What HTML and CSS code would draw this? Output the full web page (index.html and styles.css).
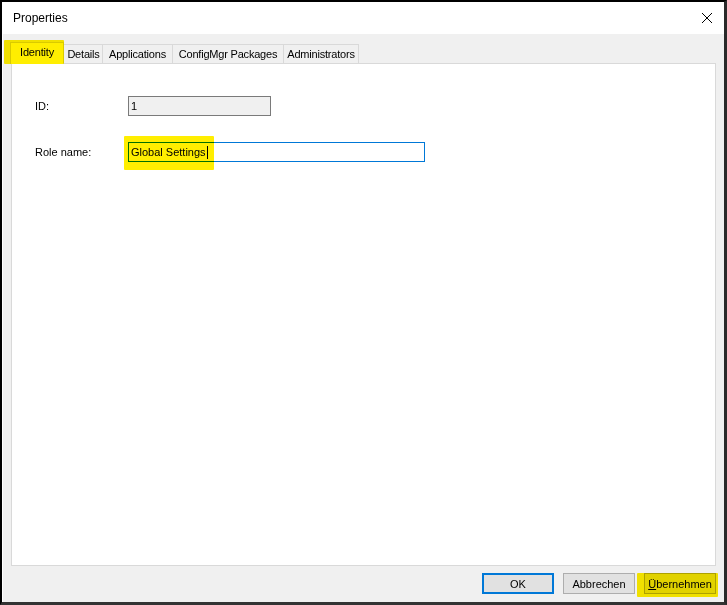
FILE: index.html
```html
<!DOCTYPE html>
<html>
<head>
<meta charset="utf-8">
<link rel="stylesheet" href="styles.css">
</head>
<body>
<div class="window">
  <div class="titlebar">
    <span class="title">Properties</span>
    <svg class="close" width="12" height="12" viewBox="0 0 12 12"><path d="M1 1 L11 11 M11 1 L1 11" stroke="#000" stroke-width="1" fill="none"/></svg>
  </div>
  <div class="content">
    <div class="tabs">
      <div class="tab selected">Identity</div>
      <div class="tab tab-details">Details</div>
      <div class="tab tab-apps">Applications</div>
      <div class="tab tab-pkgs">ConfigMgr Packages</div>
      <div class="tab tab-admins">Administrators</div>
    </div>
    <div class="panel">
      <div class="row">
        <span class="label">ID:</span>
        <div class="field readonly">1</div>
      </div>
      <div class="row">
        <span class="label">Role name:</span>
        <div class="field focused">Global Settings<span class="caret"></span></div>
      </div>
    </div>
    <div class="buttons">
      <button class="btn default">OK</button>
      <button class="btn">Abbrechen</button>
      <button class="btn"><u>Ü</u>bernehmen</button>
    </div>
  </div>
  <div class="hl hl-tab"></div>
  <div class="hl hl-role"></div>
  <div class="hl hl-apply"></div>
</div>
</body>
</html>
```
FILE: styles.css
```css
html, body {
  margin: 0;
  padding: 0;
}
body {
  width: 727px;
  height: 605px;
  overflow: hidden;
  font-family: "Liberation Sans", Arial, sans-serif;
  font-size: 11px;
  color: #000;
}
.window {
  position: relative;
  box-sizing: border-box;
  width: 727px;
  height: 605px;
  border-top: 2px solid #000;
  border-left: 2px solid #000;
  border-right: 3px solid #2a2a2a;
  border-bottom: 3px solid #333;
  display: flex;
  flex-direction: column;
  background: #f0f0f0;
}
.titlebar {
  height: 32px;
  background: #fff;
  display: flex;
  align-items: center;
  justify-content: space-between;
  padding: 0 11px 0 11px;
  flex: none;
}
.title {
  font-size: 12px;
}
.close {
  display: block;
}
.content {
  flex: 1;
  display: flex;
  flex-direction: column;
  padding: 8px 8px 0 9px;
  box-shadow: inset 1px 0 0 #fff;
}
.tabs {
  display: flex;
  align-items: flex-end;
  padding-left: 1px;
  height: 21px;
  position: relative;
  z-index: 1;
}
.tab {
  box-sizing: border-box;
  height: 19px;
  line-height: 18px;
  padding: 0;
  text-align: center;
  border: 1px solid #d9d9d9;
  border-bottom: none;
  margin-left: -1px;
  background: #f0f0f0;
  white-space: nowrap;
  letter-spacing: -0.2px;
}
.tab.selected {
  width: 54px;
  height: 22px;
  line-height: 19px;
  margin: 0 -2px -1px -2px;
  background: #fff;
  position: relative;
  z-index: 2;
}
.tab-details { width: 42px; padding-left: 3px; }
.tab-apps { width: 71px; }
.tab-pkgs { width: 112px; }
.tab-admins { width: 76px; }
.panel {
  flex: 1;
  background: #fff;
  border: 1px solid #d9d9d9;
  padding: 32px 0 0 23px;
  display: flex;
  flex-direction: column;
  gap: 26px;
}
.row {
  display: flex;
  align-items: center;
  height: 20px;
}
.label {
  width: 93px;
  flex: none;
}
.field {
  box-sizing: border-box;
  height: 20px;
  line-height: 18px;
  padding-left: 2px;
  white-space: nowrap;
  display: flex;
  align-items: center;
}
.field.readonly {
  width: 143px;
  border: 1px solid #7a7a7a;
  background: #f0f0f0;
}
.field.focused {
  width: 297px;
  border: 1px solid #0078d7;
  background: #fff;
}
.caret {
  display: inline-block;
  width: 1px;
  height: 13px;
  background: #000;
  margin-left: 1px;
}
.buttons {
  height: 36px;
  flex: none;
  display: flex;
  justify-content: flex-end;
  align-items: flex-start;
  padding-top: 7px;
  box-sizing: border-box;
  gap: 9px;
}
.btn {
  box-sizing: border-box;
  width: 72px;
  height: 21px;
  padding: 0;
  margin: 0;
  font-family: "Liberation Sans", Arial, sans-serif;
  font-size: 11px;
  color: #000;
  background: #e1e1e1;
  border: 1px solid #adadad;
}
.btn.default {
  border: 2px solid #0078d7;
}
.btn u {
  text-decoration: underline;
}
.hl {
  position: absolute;
  background: rgb(255, 238, 0);
  mix-blend-mode: multiply;
  border-radius: 1px;
  z-index: 5;
  pointer-events: none;
}
.hl-tab {
  left: 2px;
  top: 38px;
  width: 60px;
  height: 24px;
}
.hl-role {
  left: 122px;
  top: 134px;
  width: 90px;
  height: 34px;
}
.hl-apply {
  left: 635px;
  top: 571px;
  width: 81px;
  height: 24px;
}
```
